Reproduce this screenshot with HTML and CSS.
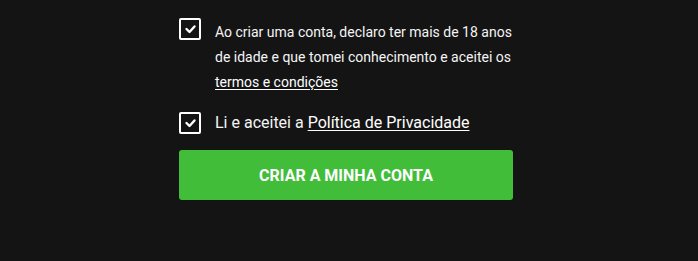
FILE: index.html
```html
<!DOCTYPE html>
<html lang="pt">
<head>
<meta charset="utf-8">
<title>Criar conta</title>
<link rel="stylesheet" href="styles.css">
</head>
<body>
<div class="page">
  <form class="form">
    <label class="check-row">
      <span class="box"><svg viewBox="0 0 22 22" width="22" height="22"><polyline points="7.5,11 10.5,14 15.5,8.5" fill="none" stroke="#fff" stroke-width="2.4" stroke-linecap="round" stroke-linejoin="round"/></svg></span>
      <span class="text small">Ao criar uma conta, declaro ter mais de 18 anos de idade e que tomei conhecimento e aceitei os <a href="#">termos e condições</a></span>
    </label>
    <label class="check-row center">
      <span class="box"><svg viewBox="0 0 22 22" width="22" height="22"><polyline points="7.5,11 10.5,14 15.5,8.5" fill="none" stroke="#fff" stroke-width="2.4" stroke-linecap="round" stroke-linejoin="round"/></svg></span>
      <span class="text large">Li e aceitei a <a href="#">Política de Privacidade</a></span>
    </label>
    <button type="button" class="submit">CRIAR A MINHA CONTA</button>
  </form>
</div>
</body>
</html>
```

FILE: styles.css
```css
html, body {
  margin: 0;
  padding: 0;
  background: #141414;
}
body {
  font-family: Roboto, "Liberation Sans", sans-serif;
  color: #f4f4f4;
}
.page {
  padding: 18px 0 0 179px;
}
.form {
  width: 334px;
  display: flex;
  flex-direction: column;
}
.check-row {
  display: flex;
  align-items: flex-start;
  gap: 14px;
}
.check-row.center {
  align-items: center;
  margin-top: 14px;
}
.box {
  flex: none;
  width: 22px;
  height: 22px;
  box-sizing: border-box;
  border: 2px solid #ffffff;
  border-radius: 2px;
  position: relative;
  display: block;
}
.box svg {
  position: absolute;
  left: -2px;
  top: -2px;
}
.text.small {
  font-size: 14px;
  line-height: 25.3px;
  margin-top: 1.5px;
}
.text.large {
  font-size: 16px;
  line-height: 28px;
}
.text a {
  color: #ffffff;
  text-decoration: underline;
  text-underline-offset: 2px;
}
.submit {
  margin-top: 13px;
  height: 50px;
  width: 334px;
  border: none;
  border-radius: 3px;
  background: #41bd3a;
  color: #ffffff;
  font-family: Roboto, "Liberation Sans", sans-serif;
  font-weight: 700;
  font-size: 16px;
  cursor: pointer;
}
```
